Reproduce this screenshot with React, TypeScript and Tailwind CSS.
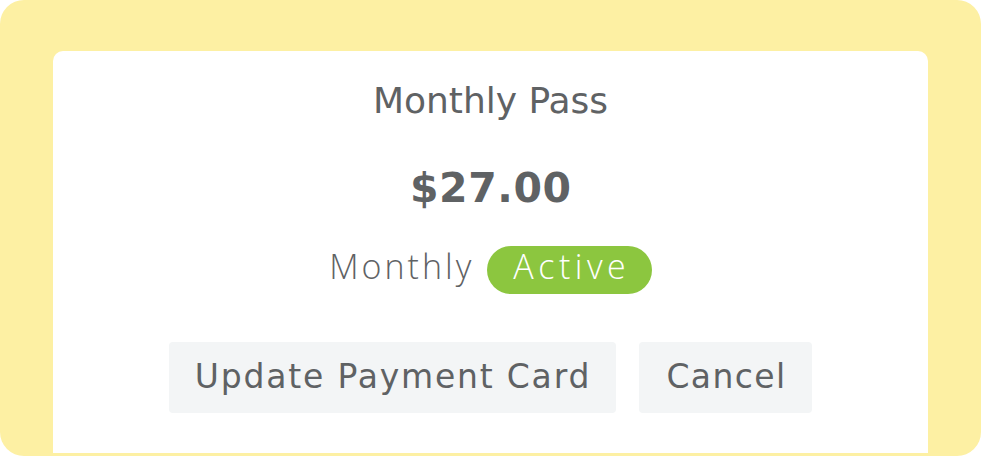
export default function App() {
  const dv = { fontFamily: '"DejaVu Sans", "Open Sans", sans-serif' };
  const os = { fontFamily: '"Open Sans", "Noto Sans", sans-serif' };
  return (
    <div className="w-[981px] h-[456px] bg-[#fdf0a3] rounded-[24px] pt-[51px] px-[53px] pb-[3px]" style={dv}>
      <div className="h-full bg-white rounded-t-[10px] flex flex-col items-center text-[#5f6264]">
        <div className="mt-[29.5px] h-[40px] leading-[40px] text-[36px] font-normal">Monthly Pass</div>
        <div className="mt-[39.5px] h-[56px] leading-[56px] text-[41px] font-bold tracking-[0.6px] pl-[0.6px]">$27.00</div>
        <div className="mt-[30px] flex items-start gap-[13px]" style={os}>
          <span className="text-[34px] font-light leading-[40px] tracking-[3px]">Monthly</span>
          <span className="h-[48px] pl-[26px] pr-[21.5px] rounded-full bg-[#8cc63f] text-white text-[34px] font-light leading-[40px] tracking-[4.5px]">Active</span>
        </div>
        <div className="mt-[48px] flex gap-[23px]">
          <button className="h-[71px] pb-[2px] pl-[26px] pr-[25.2px] rounded-[4px] bg-[#f3f5f6] text-[33px] tracking-[1.8px] text-[#5f6264]">Update Payment Card</button>
          <button className="h-[71px] pb-[2px] pl-[27px] pr-[25.6px] rounded-[4px] bg-[#f3f5f6] text-[33px] tracking-[1.4px] text-[#5f6264]">Cancel</button>
        </div>
      </div>
    </div>
  );
}
